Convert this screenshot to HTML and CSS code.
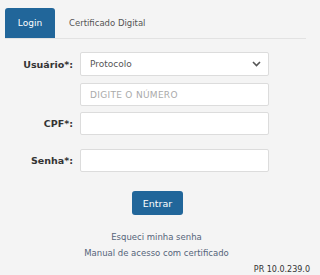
FILE: index.html
```html
<!DOCTYPE html>
<html lang="pt-BR">
<head>
<meta charset="utf-8">
<link rel="stylesheet" href="styles.css">
</head>
<body>
<div class="page">
  <div class="tabs">
    <div class="tab active">Login</div>
    <div class="tab">Certificado Digital</div>
  </div>
  <form class="form">
    <div class="row">
      <label class="label">Usuário*:</label>
      <div class="select">
        <span>Protocolo</span>
        <svg class="chev" width="9" height="6" viewBox="0 0 9 6"><path d="M1 1 L4.5 4.5 L8 1" fill="none" stroke="#555" stroke-width="1.6"/></svg>
      </div>
    </div>
    <div class="row sub">
      <span class="label"></span>
      <div class="input placeholder">DIGITE O NÚMERO</div>
    </div>
    <div class="row cpf">
      <label class="label">CPF*:</label>
      <div class="input"></div>
    </div>
    <div class="row senha">
      <label class="label">Senha*:</label>
      <div class="input"></div>
    </div>
    <div class="actions">
      <button type="button" class="btn">Entrar</button>
    </div>
    <div class="links">
      <a class="link">Esqueci minha senha</a>
      <a class="link">Manual de acesso com certificado</a>
    </div>
    <div class="version">PR 10.0.239.0</div>
  </form>
</div>
</body>
</html>
```
FILE: styles.css
```css
html, body {
  margin: 0;
  padding: 0;
  background: #f4f4f4;
}
body {
  font-family: "DejaVu Sans", Verdana, sans-serif;
  font-size: 9px;
  color: #444;
  width: 313px;
  height: 275px;
  overflow: hidden;
}
.page {
  padding: 8px 5px 0 5px;
}
.tabs {
  display: flex;
  align-items: stretch;
  border-bottom: 1px solid #e2e2e2;
  height: 30px;
  margin-right: 2px;
}
.tab {
  display: flex;
  align-items: center;
  padding: 0 14px;
  color: #555;
  font-size: 8.5px;
}
.tab.active {
  background: #21669a;
  color: #fff;
  border-radius: 3px 3px 0 0;
  padding: 0 12px;
  width: 26px;
  justify-content: center;
  font-size: 9px;
}
.form {
  display: flex;
  flex-direction: column;
}
.row {
  display: flex;
  align-items: center;
  margin-top: 6px;
}
.row:first-child {
  margin-top: 13px;
}
.row.sub { margin-top: 7px; }
.row.cpf { margin-top: 6px; }
.row.senha { margin-top: 14px; }
.label {
  width: 68px;
  text-align: right;
  font-weight: bold;
  color: #333;
  margin-right: 7px;
  font-size: 9.5px;
}
.select, .input {
  box-sizing: border-box;
  width: 189px;
  height: 23px;
  background: #fff;
  border: 1px solid #dcdcdc;
  border-radius: 2px;
  display: flex;
  align-items: center;
  padding: 0 9px;
  color: #555;
}
.select {
  justify-content: space-between;
  height: 24px;
}
.chev { margin-right: -2px; }
.placeholder {
  color: #aaa;
  letter-spacing: 0.3px;
}
.actions {
  display: flex;
  justify-content: center;
  margin-top: 19px;
}
.btn {
  font-family: inherit;
  font-size: 9.5px;
  background: #21669a;
  color: #fff;
  border: none;
  border-radius: 3px;
  width: 51px;
  height: 24px;
  margin-left: 2px;
}
.links {
  display: flex;
  flex-direction: column;
  align-items: center;
  margin-top: 17px;
  gap: 6px;
}
.link {
  color: #54647a;
  font-size: 8.5px;
}
.version {
  align-self: flex-end;
  font-size: 8px;
  color: #333;
  margin-top: 7px;
  margin-right: -2px;
}
```
